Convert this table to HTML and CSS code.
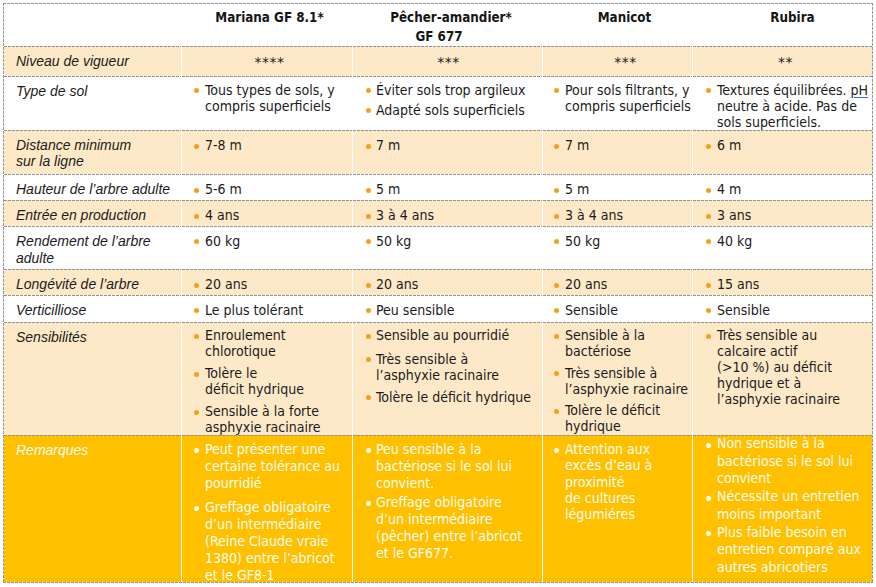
FILE: index.html
```html
<!DOCTYPE html>
<html lang="fr">
<head>
<meta charset="utf-8">
<title>Porte-greffes de l’abricotier</title>
<link rel="stylesheet" href="styles.css">
</head>
<body>
<div class="sheet">
  <div class="row head">
    <div class="cell lab"></div>
    <div class="cell th h1">Mariana GF 8.1*</div>
    <div class="cell th"><span class="h2a">Pêcher-amandier*</span><span class="h2b">GF 677</span></div>
    <div class="cell th h3">Manicot</div>
    <div class="cell th h4">Rubira</div>
  </div>

  <div class="row tint r-niv">
    <div class="cell lab">Niveau de vigueur</div>
    <div class="cell stars s1">****</div>
    <div class="cell stars s2">***</div>
    <div class="cell stars s3">***</div>
    <div class="cell stars s4">**</div>
  </div>

  <div class="row r-type">
    <div class="cell lab">Type de sol</div>
    <div class="cell c1"><ul class="list"><li><span>Tous types de sols, y<br>compris superficiels</span></li></ul></div>
    <div class="cell c2"><ul class="list m4"><li><span>Éviter sols trop argileux</span></li><li><span>Adapté sols superficiels</span></li></ul></div>
    <div class="cell c3"><ul class="list"><li><span>Pour sols filtrants, y<br>compris superficiels</span></li></ul></div>
    <div class="cell c4"><ul class="list"><li><span>Textures équilibrées. <span class="ph">pH</span><br>neutre à acide. Pas de<br>sols superficiels.</span></li></ul></div>
  </div>

  <div class="row tint r-dist">
    <div class="cell lab">Distance minimum<br>sur la ligne</div>
    <div class="cell c1"><ul class="list"><li><span>7-8 m</span></li></ul></div>
    <div class="cell c2"><ul class="list"><li><span>7 m</span></li></ul></div>
    <div class="cell c3"><ul class="list"><li><span>7 m</span></li></ul></div>
    <div class="cell c4"><ul class="list"><li><span>6 m</span></li></ul></div>
  </div>

  <div class="row r-haut">
    <div class="cell lab">Hauteur de l’arbre adulte</div>
    <div class="cell c1"><ul class="list"><li><span>5-6 m</span></li></ul></div>
    <div class="cell c2"><ul class="list"><li><span>5 m</span></li></ul></div>
    <div class="cell c3"><ul class="list"><li><span>5 m</span></li></ul></div>
    <div class="cell c4"><ul class="list"><li><span>4 m</span></li></ul></div>
  </div>

  <div class="row tint r-prod">
    <div class="cell lab">Entrée en production</div>
    <div class="cell c1"><ul class="list"><li><span>4 ans</span></li></ul></div>
    <div class="cell c2"><ul class="list"><li><span>3 à 4 ans</span></li></ul></div>
    <div class="cell c3"><ul class="list"><li><span>3 à 4 ans</span></li></ul></div>
    <div class="cell c4"><ul class="list"><li><span>3 ans</span></li></ul></div>
  </div>

  <div class="row r-rend">
    <div class="cell lab">Rendement de l’arbre<br>adulte</div>
    <div class="cell c1"><ul class="list"><li><span>60 kg</span></li></ul></div>
    <div class="cell c2"><ul class="list"><li><span>50 kg</span></li></ul></div>
    <div class="cell c3"><ul class="list"><li><span>50 kg</span></li></ul></div>
    <div class="cell c4"><ul class="list"><li><span>40 kg</span></li></ul></div>
  </div>

  <div class="row tint r-long">
    <div class="cell lab">Longévité de l’arbre</div>
    <div class="cell c1"><ul class="list"><li><span>20 ans</span></li></ul></div>
    <div class="cell c2"><ul class="list"><li><span>20 ans</span></li></ul></div>
    <div class="cell c3"><ul class="list"><li><span>20 ans</span></li></ul></div>
    <div class="cell c4"><ul class="list"><li><span>15 ans</span></li></ul></div>
  </div>

  <div class="row r-vert">
    <div class="cell lab">Verticilliose</div>
    <div class="cell c1"><ul class="list"><li><span>Le plus tolérant</span></li></ul></div>
    <div class="cell c2"><ul class="list"><li><span>Peu sensible</span></li></ul></div>
    <div class="cell c3"><ul class="list"><li><span>Sensible</span></li></ul></div>
    <div class="cell c4"><ul class="list"><li><span>Sensible</span></li></ul></div>
  </div>

  <div class="row tint r-sens">
    <div class="cell lab">Sensibilités</div>
    <div class="cell c1"><ul class="list m6"><li><span>Enroulement<br>chlorotique</span></li><li><span>Tolère le<br>déficit hydrique</span></li><li><span>Sensible à la forte<br>asphyxie racinaire</span></li></ul></div>
    <div class="cell c2"><ul class="list m6 first-wide"><li><span>Sensible au pourridié</span></li><li><span>Très sensible à<br>l’asphyxie racinaire</span></li><li><span>Tolère le déficit hydrique</span></li></ul></div>
    <div class="cell c3"><ul class="list m55"><li><span>Sensible à la<br>bactériose</span></li><li><span>Très sensible à<br>l’asphyxie racinaire</span></li><li><span>Tolère le déficit<br>hydrique</span></li></ul></div>
    <div class="cell c4"><ul class="list"><li><span>Très sensible au<br>calcaire actif<br>(&gt;10 %) au déficit<br>hydrique et à<br>l’asphyxie racinaire</span></li></ul></div>
  </div>

  <div class="row gold r-rem">
    <div class="cell lab">Remarques</div>
    <div class="cell c1"><ul class="list m7"><li><span>Peut présenter une<br>certaine tolérance au<br>pourridié</span></li><li><span>Greffage obligatoire<br>d’un intermédiaire<br>(Reine Claude vraie<br>1380) entre l’abricot<br>et le GF8-1</span></li></ul></div>
    <div class="cell c2"><ul class="list m15"><li><span>Peu sensible à la<br>bactériose si le sol lui<br>convient.</span></li><li><span>Greffage obligatoire<br>d’un intermédiaire<br>(pêcher) entre l’abricot<br>et le GF677.</span></li></ul></div>
    <div class="cell c3"><ul class="list"><li><span>Attention aux<br>excès d’eau à<br>proximité<br>de cultures<br>légumiéres</span></li></ul></div>
    <div class="cell c4"><ul class="list m05"><li><span>Non sensible à la<br>bactériose si le sol lui<br>convient</span></li><li><span>Nécessite un entretien<br>moins important</span></li><li><span>Plus faible besoin en<br>entretien comparé aux<br>autres abricotiers</span></li></ul></div>
  </div>
</div>
</body>
</html>
```

FILE: styles.css
```css
* {
  box-sizing: border-box;
  margin: 0;
  padding: 0;
}

html,
body {
  background: #ffffff;
}

body {
  margin: 0;
  font-family: "DejaVu Sans Condensed", "DejaVu Sans", sans-serif;
  font-stretch: semi-condensed;
  color: #1b1b1b;
}

/* ---------- sheet / grid ---------- */
.sheet {
  margin: 3px 0 0 3px;
  width: 870px;
  padding: 1px;
  display: grid;
  grid-template-columns: 177px 171px 190px 150px 180px;
  grid-template-rows: 42px 30px 54px 44px 26px 26px 43px 26px 27px 113px 147px;
  background:
    repeating-linear-gradient(90deg, #939393 0 3px, transparent 3px 4px) left top / 100% 1px no-repeat,
    repeating-linear-gradient(90deg, #939393 0 3px, transparent 3px 4px) left bottom / 100% 1px no-repeat,
    repeating-linear-gradient(180deg, #939393 0 3px, transparent 3px 4px) left top / 1px 100% no-repeat,
    repeating-linear-gradient(180deg, #939393 0 3px, transparent 3px 4px) right top / 1px 100% no-repeat,
    #ffffff;
}

.row {
  display: contents;
}

.cell {
  --lh: 16px;
  --pt: 7px;
  --gap: 6.5px;
  padding-top: var(--pt);
  font-size: 14px;
  line-height: var(--lh);
  white-space: nowrap;
  background-image: repeating-linear-gradient(90deg, #939393 0 3px, transparent 3px 4px);
  background-size: 100% 1px;
  background-repeat: no-repeat;
  background-position: 0 0;
}

.cell + .cell {
  border-left: 1px solid #ffffff;
}

.head .cell {
  background-image: none;
}

.tint .cell {
  background-color: #fde9c8;
}

.gold .cell {
  background-color: #ffc000;
  color: #fffdf3;
}

/* ---------- first column labels ---------- */
.lab {
  --lh: 17px;
  --pt: 6.5px;
  font-family: "Liberation Sans", Arial, sans-serif;
  font-stretch: normal;
  font-style: italic;
  font-size: 14px;
  padding-left: 12px;
}

.r-dist .lab {
  --lh: 16.5px;
}

.r-rend .lab {
  --lh: 17.5px;
}

/* ---------- header ---------- */
.th {
  --lh: 19px;
  --pt: 3.5px;
  font-weight: bold;
  font-size: 13.3px;
  text-align: center;
  color: #161616;
}

.th span {
  display: block;
}

.h1 { padding-left: 5px; }
.h3 { padding-left: 14px; }
.h4 { padding-left: 20px; }
.h2a { padding-left: 7px; }
.h2b { padding-right: 17px; }

/* ---------- vigour stars ---------- */
.stars {
  --pt: 8px;
  font-family: "DejaVu Sans", sans-serif;
  font-stretch: normal;
  font-size: 14px;
  text-align: center;
  letter-spacing: 0.5px;
}

.s1 { padding-left: 5px; }
.s2 { padding-left: 2px; }
.s3 { padding-left: 16px; }
.s4 { padding-left: 6px; }

/* ---------- bullet lists ---------- */
.list {
  list-style: none;
}

.list li {
  display: flex;
  align-items: flex-start;
}

.list li::before {
  content: "";
  flex: none;
  width: 5px;
  height: 5px;
  border-radius: 50%;
  background: #f5a01a;
  margin-top: calc((var(--lh) - 16.3px) / 2 + 7px);
  margin-right: var(--gap);
}

.gold .list li::before {
  background: #fffdf3;
}

.c1 { padding-left: 11.5px; --gap: 6.5px; }
.c2 { padding-left: 12.5px; --gap: 5.5px; }
.c3 { padding-left: 10.5px; --gap: 6.5px; }
.c4 { padding-left: 12.5px; --gap: 6.5px; }

.m4 li + li { margin-top: 4px; }
.m55 li + li { margin-top: 5.5px; }
.m6 li + li { margin-top: 6px; }
.m7 li + li { margin-top: 7px; }
.m15 li + li { margin-top: 1.5px; }
.m05 li + li { margin-top: 0.5px; }
.first-wide li:nth-child(2) { margin-top: 7.5px; }

.ph {
  text-decoration: underline;
  text-decoration-color: #3a6fd8;
  text-decoration-thickness: 1px;
  text-underline-offset: 2px;
}

/* ---------- row specific vertical rhythm ---------- */
.r-type .cell:not(.lab) { --pt: 5.5px; }
.r-rend .cell:not(.lab) { --pt: 6.5px; }
.r-sens .cell:not(.lab) { --pt: 5px; }
.r-vert .cell:not(.lab) { --pt: 6.5px; }

.r-rem .cell:not(.lab) { --lh: 17px; --pt: 5.5px; }
.r-rem .cell.c2:not(.lab) { --lh: 17.2px; }
.r-rem .cell.c3:not(.lab) { --lh: 16.3px; --pt: 6px; }
.r-rem .cell.c4:not(.lab) { --lh: 17.5px; --pt: 0px; }
```
